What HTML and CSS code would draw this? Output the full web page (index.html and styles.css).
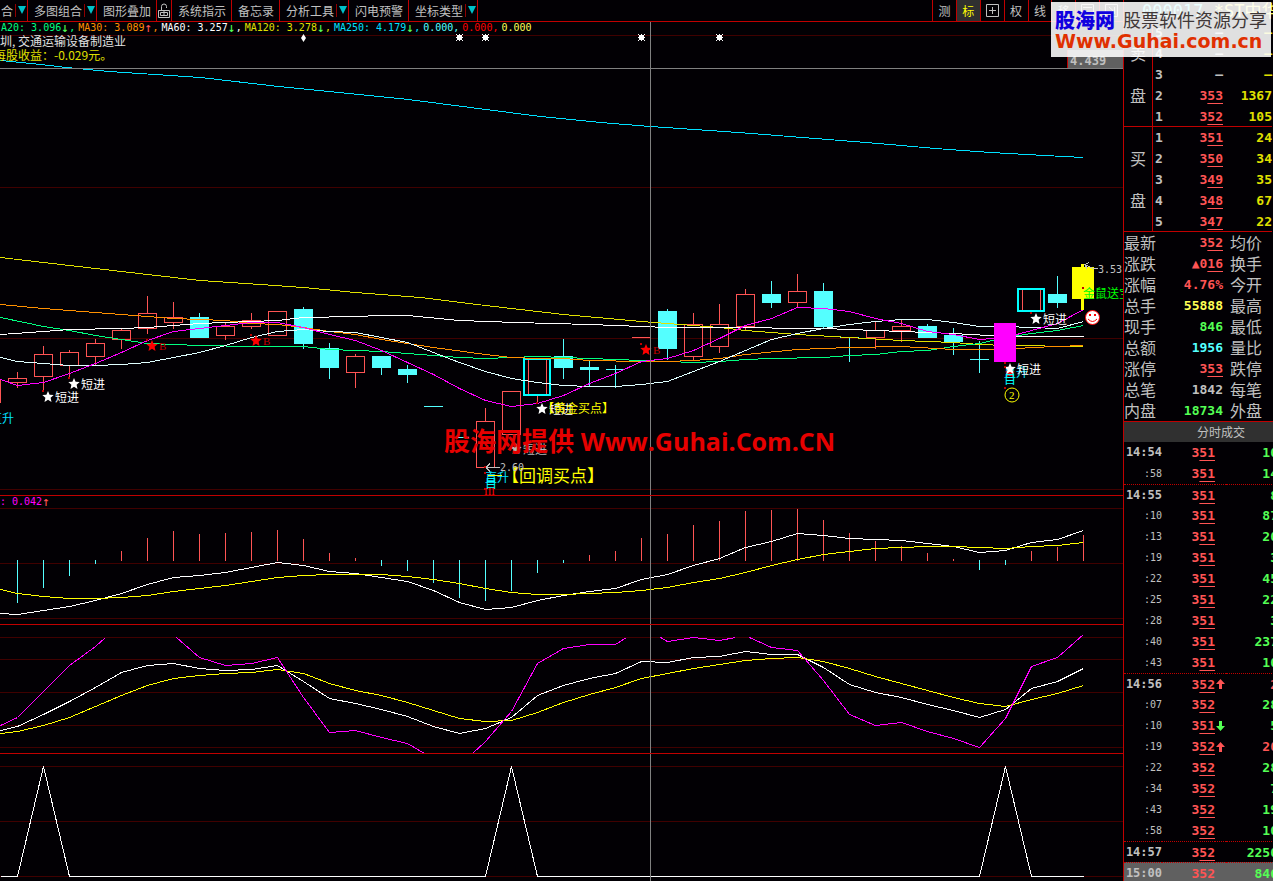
FILE: index.html
```
<!DOCTYPE html>
<html lang="zh-CN">
<head>
    <meta charset="UTF-8">
    <meta name="viewport" content="width=device-width, initial-scale=1.0">
    <title>000017 *ST中华</title>
    <link rel="stylesheet" href="styles.css">
</head>
<body>

<div class="terminal">
    <main class="charts">
        <nav class="toolbar">
            <div class="tools">
                <button class="tool first">合<span class="drop"></span></button>
                <button class="tool">多图组合<span class="drop"></span></button>
                <button class="tool plain">图形叠加</button>
                <button class="tool lock" aria-label="锁定">
                    <svg width="12" height="16" viewBox="0 0 12 16">
                        <path d="M3.5 7V3.500a2.500 2.500 0 0 1 5 0V5M.5 7.500h11v7H.5zM2.500 9.500h7v3h-7z" />
                        <path d="M6 8v5" />
                    </svg>
                </button>
                <button class="tool plain">系统指示</button>
                <button class="tool plain">备忘录</button>
                <button class="tool">分析工具<span class="drop"></span></button>
                <button class="tool plain">闪电预警</button>
                <button class="tool">坐标类型<span class="drop"></span></button>
            </div>
            <div class="modes">
                <button class="mode">测</button>
                <button class="mode active">标</button>
                <button class="mode" aria-label="十字">
                    <svg width="13" height="13" viewBox="0 0 13 13"><path d="M.5.5h12v12H.5zM6.500 3v7M3 6.500h7" /></svg>
                </button>
                <button class="mode">权</button>
                <button class="mode">线</button>
                <button class="mode">移</button>
                <button class="mode" aria-label="窗口">
                    <svg width="13" height="13" viewBox="0 0 13 13"><path d="M.5.5h12v12H.5zM2 3.500h9" /></svg>
                </button>
                <button class="mode" aria-label="末尾">
                    <svg width="13" height="13" viewBox="0 0 13 13"><path d="M.5.5h12v12H.5zM9.500 3v7M4 3l4 3.500-4 3.500" /></svg>
                </button>
            </div>
        </nav>

        <section class="panel">
            <svg class="chart" id="price" viewBox="0 22 1123 473" preserveAspectRatio="none"></svg>
            <div class="overlay">
                <div class="legend">
                    <span class="ma20">A20: 3.096</span><i class="down">↓</i><b class="ma20">,</b>
                    <span class="ma30">MA30: 3.089</span><i class="up">↑</i><b class="ma30">,</b>
                    <span class="ma60">MA60: 3.257</span><i class="down">↓</i><b class="ma60">,</b>
                    <span class="ma120">MA120: 3.278</span><i class="down">↓</i><b class="ma120">,</b>
                    <span class="ma250">MA250: 4.179</span><i class="down">↓</i><b class="ma250">,</b>
                    <span class="cyan">0.000</span><b class="cyan">,</b>
                    <span class="red">0.000</span><b class="red">,</b>
                    <span class="yellow">0.000</span>
                </div>
                <p class="info">圳, 交通运输设备制造业</p>
                <p class="info eps">每股收益：-0.029元。</p>
            </div>
            <div class="watermark">股海网提供 <span>Www.Guhai.Com.CN</span></div>
        </section>

        <section class="panel">
            <svg class="chart" id="macd" viewBox="0 496 1123 128" preserveAspectRatio="none"></svg>
            <div class="overlay">
                <div class="legend macd-legend"><span class="magenta">: 0.042</span><i class="up">↑</i></div>
            </div>
        </section>

        <section class="panel">
            <svg class="chart" id="kdj" viewBox="0 625 1123 128" preserveAspectRatio="none"></svg>
        </section>

        <section class="panel last">
            <svg class="chart" id="signal" viewBox="0 754 1123 127" preserveAspectRatio="none"></svg>
        </section>
    </main>

    <aside class="quote">
        <h1 class="stock"><span class="cyan">000017</span> <span class="yellow">*ST中华</span></h1>
        <table class="book" id="book"></table>
        <table class="stats" id="stats"></table>
        <h2 class="trades-title">分时成交</h2>
        <table class="trades" id="trades"></table>
    </aside>

    <div class="brand">
        <div class="brand-top"><strong>股海网</strong><span>股票软件资源分享</span></div>
        <div class="brand-url">Www.Guhai.com.cn</div>
    </div>
</div>

<script src="script.js"></script>
</body>
</html>
```

FILE: styles.css
```
body {
    margin: 0;
    background: #020004;
    color: #c0c0c0;
    font-family: "DejaVu Sans Mono", "Noto Sans CJK SC", monospace;
    font-size: 12px;
    overflow: hidden;
}

button {
    margin: 0;
    padding: 0;
    background: none;
    border: 0;
    color: inherit;
    font: inherit;
}

.terminal {
    position: relative;
    display: grid;
    grid-template-columns: minmax(0, 1fr) 149px;
    height: 100vh;
    overflow: hidden;
}

.charts {
    display: grid;
    grid-template-rows: 22px minmax(0, 474fr) minmax(0, 129fr) minmax(0, 129fr) minmax(0, 127fr);
    border-right: 1px solid #c00000;
    min-width: 0;
}

/* toolbar */

.toolbar {
    display: flex;
    justify-content: space-between;
    border-bottom: 1px solid #c00000;
    font-family: "Noto Sans CJK SC", sans-serif;
}

.tools,
.modes {
    display: flex;
}

.tool {
    display: flex;
    align-items: center;
    gap: 2px;
    padding-left: 6px;
    border-right: 1px solid #c00000;
    white-space: nowrap;
}

.first {
    padding-left: 1px;
}

.plain {
    padding-right: 5px;
}

.lock {
    padding: 0 1px;
}

.drop {
    display: flex;
    justify-content: center;
    width: 11px;
    height: 13px;
    border-left: 1px solid #900000;
}

.drop::before {
    content: "";
    width: 0;
    height: 0;
    margin-top: 2px;
    border: 4px solid transparent;
    border-top: 8px solid #00c0c8;
    border-bottom: 0;
}

.tool svg,
.mode svg {
    fill: none;
    stroke: #c0c0c0;
}

.modes {
    width: 190px;
    border-left: 1px solid #c00000;
}

.mode {
    flex: 1;
    display: flex;
    align-items: center;
    justify-content: center;
    border-right: 1px solid #c00000;
}

.mode:last-child {
    border-right: 0;
}

.mode.active {
    background: #303030;
    color: #ffff00;
}

/* chart panels */

.panel {
    position: relative;
    border-bottom: 1px solid #c00000;
    min-height: 0;
    overflow: hidden;
}

.panel.last {
    border-bottom: 0;
}

.chart {
    display: block;
    width: 100%;
    height: 100%;
}

.overlay {
    position: absolute;
    top: 0;
    left: 0;
}

.legend {
    display: flex;
    padding-left: 1px;
    height: 12px;
    line-height: 12px;
    font-size: 10px;
    white-space: nowrap;
}

.legend b {
    width: 9px;
    font-weight: normal;
}

.legend i {
    width: 8px;
    font-size: 13px;
    font-style: normal;
}

.macd-legend {
    padding-left: 0;
}

.info {
    margin: 0;
    height: 14px;
    line-height: 14px;
    color: #e0e0e0;
    font-family: "Noto Sans CJK SC", sans-serif;
    white-space: nowrap;
}

.eps {
    margin-left: -6px;
    color: #e0e000;
}

.ma20 { color: #00ff80; }
.ma30 { color: #ff9000; }
.ma60 { color: #ffffff; }
.ma120 { color: #e0e000; }
.ma250 { color: #00e0ff; }
.down { color: #54ff54; }
.up { color: #ff5454; }
.cyan { color: #54ffff; }
.red { color: #ff0000; }
.yellow { color: #ffff54; }
.magenta { color: #ff00ff; }
.green { color: #54ff54; }
.rise { color: #ff5454; }
.volume { color: #e0e000; }

.watermark {
    position: absolute;
    top: 401px;
    left: 444px;
    line-height: 36px;
    color: #e60000;
    font-family: "Open Sans", "Noto Sans CJK SC", sans-serif;
    font-size: 26px;
    font-weight: bold;
    white-space: nowrap;
}

.watermark span {
    font-size: 25px;
}

/* svg parts */

.line {
    fill: none;
    stroke-width: 1;
    shape-rendering: crispEdges;
}

.body,
.wick {
    shape-rendering: crispEdges;
}

.mark {
    font-family: "Noto Sans CJK SC", sans-serif;
    font-size: 12px;
}

.mark.big {
    font-size: 17px;
}

.mark.num {
    font-family: "DejaVu Sans Mono", monospace;
    font-size: 10px;
}

.mark.price {
    font-family: "DejaVu Sans Mono", monospace;
    font-size: 12px;
    font-weight: bold;
}

.mark.serif {
    font-family: "Liberation Serif", serif;
    font-size: 11px;
}

/* quote column */

.quote {
    overflow: hidden;
    font-size: 13px;
    font-weight: bold;
}

.stock {
    margin: 0;
    padding-left: 18px;
    height: 22px;
    line-height: 22px;
    font-size: 17px;
    font-weight: normal;
    white-space: nowrap;
}

table {
    table-layout: fixed;
    border-collapse: separate;
    border-spacing: 0;
}

th,
td {
    box-sizing: border-box;
    padding: 0;
    height: 21px;
    line-height: 19px;
    text-align: right;
    white-space: nowrap;
}

th {
    text-align: left;
    font-family: "Noto Sans CJK SC", sans-serif;
    font-size: 16px;
    font-weight: normal;
}

u {
    text-underline-offset: 3px;
    text-decoration-thickness: 1px;
}

.book {
    width: 148px;
}

.book .side,
.book tr:last-child td {
    border-bottom: 1px solid #c00000;
}

.book .side {
    width: 29px;
    border-right: 1px solid #c00000;
    line-height: 42px;
    text-align: center;
    vertical-align: middle;
}

.side span {
    display: block;
}

.book .level {
    width: 18px;
    padding-left: 2px;
    text-align: left;
}

.book .cost {
    width: 52px;
}

.stats {
    width: 149px;
}

.stats .name {
    width: 32px;
}

.stats .value {
    width: 74px;
    padding-right: 7px;
}

.trades-title {
    margin: 0;
    width: 194px;
    height: 20px;
    line-height: 19px;
    border-top: 1px solid #c00000;
    background: #303030;
    font-family: "Noto Sans CJK SC", sans-serif;
    font-size: 12px;
    font-weight: normal;
    text-align: center;
}

.trades {
    width: 154px;
}

.trades .time {
    width: 38px;
    font-size: 12px;
}

.trades .second {
    font-size: 10px;
    font-weight: normal;
}

.trades .cost {
    width: 53px;
}

.trades .trend {
    width: 11px;
    padding-left: 1px;
}

.trades svg {
    display: block;
}

.trades .minute td {
    border-top: 1px dotted #c00000;
}

.trades .close {
    background: #606060;
}

/* site banner over the corner */

.brand {
    position: absolute;
    top: 2px;
    right: 2px;
    width: 216px;
    height: 51px;
    padding: 4px 0 0 4px;
    background: rgba(255, 255, 255, 0.88);
    white-space: nowrap;
}

.brand-top {
    display: flex;
    align-items: center;
    gap: 8px;
    height: 26px;
    font-family: "Noto Sans CJK SC", sans-serif;
    font-size: 18px;
    color: #403838;
}

.brand-top strong {
    color: #1000e0;
    font-size: 20px;
    font-weight: 900;
}

.brand-url {
    line-height: 18px;
    color: #e03000;
    font-family: "DejaVu Sans", sans-serif;
    font-size: 19px;
    font-weight: bold;
}
```

FILE: script.js
```
const STEP = 26;
const FIRST = 17;

const RED = "#ff5454";
const CYAN = "#54ffff";
const GRID = "#400000";

// body top, body bottom, high, low, type (r = hollow red, c = solid cyan)
const candles = [
    [378, 383, 372, 388, "r"], [354, 377, 346, 391, "r"], [352, 366, 350, 377, "r"],
    [343, 357, 339, 365, "r"], [330, 340, 328, 349, "r"], [313, 329, 296, 334, "r"],
    [317, 323, 302, 329, "r"], [317, 338, 313, 338, "c"], [326, 336, 322, 340, "r"],
    [320, 327, 313, 329, "r"], [311, 336, 311, 336, "r"], [309, 344, 307, 349, "c"],
    [348, 368, 343, 379, "c"], [356, 373, 354, 388, "r"], [356, 368, 356, 375, "c"],
    [369, 375, 365, 383, "c"], [406, 407, 406, 407, "c"], [437, 438, 437, 438, "c"],
    [421, 468, 408, 468, "r"], [391, 435, 391, 435, "r"], [358, 396, 358, 403, "box"],
    [356, 368, 339, 379, "c"], [367, 370, 361, 386, "c"], [369, 370, 365, 388, "c"],
    [337, 338, 337, 338, "r"], [311, 349, 309, 360, "c"], [324, 357, 313, 361, "r"],
    [324, 347, 304, 353, "r"], [294, 327, 289, 331, "r"], [294, 303, 281, 308, "c"],
    [291, 303, 274, 308, "r"], [291, 327, 283, 329, "c"], [337, 338, 337, 362, "c"],
    [330, 338, 321, 349, "r"], [326, 331, 320, 342, "r"], [326, 338, 324, 338, "c"],
    [335, 342, 328, 355, "c"], [359, 360, 341, 373, "c"], null,
    [288, 312, 288, 312, "box"], [294, 303, 276, 308, "c"], null
];

const averages = [
    ["#00e0ff", "0,60 20,62 40,64 66,67 109,71 200,77 278,86 348,93 408,99 470,107 540,116 600,122 650,126 738,132 815,138 878,143 935,148 990,152 1044,155 1083,157"],
    ["#e0e000", "0,257 69,265 147,274 200,280 260,284 303,287 355,292 420,297 485,305 563,314 641,321 667,323 693,325 719,327 745,330 797,334 849,337 901,340 953,342 979,344 1005,345 1083,346"],
    ["#00ff80", "0,317 43,326 69,330 95,335 147,343 199,345 251,346 303,346 329,349 381,351 407,353 459,357 485,358 511,357 537,356 589,358 641,360 667,361 693,362 719,361 745,359 771,358 823,357 849,355 875,354 901,351 927,350 953,346 979,343 1005,337 1031,333 1057,330 1083,325"],
    ["#ff9000", "0,304 43,308 69,310 121,314 147,316 173,318 225,320 251,323 277,324 303,327 329,331 355,334 381,339 407,343 433,347 485,354 511,357 537,358 563,358 589,360 641,361 667,361 693,360 719,358 745,354 797,349 849,347 901,346 953,349 1005,349 1031,347 1057,346 1083,345"],
    ["#ffffff", "0,334 43,331 69,329 121,328 147,327 199,323 225,322 277,320 303,317 355,316 381,315 407,315 459,320 515,322 589,324 667,327 719,327 823,328 849,329 901,331 953,333 1005,336 1083,336"],
    ["#e0ffff", "0,357 17,361 43,363 69,365 95,365 121,364 147,362 173,357 199,352 225,345 251,337 277,331 303,329 329,331 355,332 381,337 407,342 433,352 459,362 485,371 511,378 537,382 563,385 589,386 615,386 641,384 667,381 693,371 719,361 745,350 771,339 797,333 823,328 849,324 875,321 901,319 927,319 953,322 979,326 1005,326 1031,327 1057,328 1083,321"],
    ["#ff00ff", "0,379 17,385 43,382 69,373 95,363 121,352 147,340 173,331 199,328 225,325 251,322 277,322 303,327 329,334 355,340 381,350 407,362 433,374 459,388 485,400 511,406 537,403 563,395 589,383 615,373 641,361 667,358 693,350 719,338 745,325 771,318 797,307 823,308 849,311 875,318 901,323 927,331 953,334 979,339 1005,337 1031,330 1057,323 1083,309"]
];

const macdBars = [603, 588, 576, 564, 551, 538, 531, 534, 533, 532, 530, 539, 553, 558, 566, 571, 583, 598, 601, 591, 573, 563, 555, 551, 538, 534, 525, 521, 511, 510, 509, 520, 533, 541, 546, 553, 559, 570, 565, 551, 547, 535];
const dif = [614, 610, 606, 600, 593, 584, 577, 575, 572, 567, 562, 565, 571, 573, 577, 581, 590, 602, 609, 607, 600, 595, 591, 588, 579, 574, 565, 558, 547, 541, 533, 535, 538, 539, 540, 543, 546, 552, 550, 542, 539, 530];
const dea = [593, 596, 598, 598, 597, 595, 591, 588, 585, 581, 577, 575, 574, 574, 574, 576, 579, 583, 588, 592, 594, 594, 593, 592, 590, 587, 582, 578, 572, 565, 559, 554, 551, 548, 547, 546, 546, 547, 548, 546, 545, 542];

const kLine = [726, 714, 701, 687, 672, 665, 663, 668, 670, 669, 665, 681, 698, 703, 709, 716, 726, 733, 728, 717, 695, 685, 678, 673, 661, 662, 657, 656, 651, 654, 654, 667, 684, 692, 697, 704, 710, 717, 709, 688, 681, 668];
const dLine = [731, 725, 717, 706, 695, 685, 678, 675, 673, 672, 669, 673, 683, 690, 695, 702, 710, 718, 721, 720, 712, 702, 694, 687, 678, 673, 668, 664, 660, 658, 657, 661, 668, 676, 683, 690, 697, 703, 706, 699, 693, 685];
// J leaves the panel at both ends, so it is kept as separate runs
const jLine = [
    "0,725 17,717 43,691 69,665 95,646 105,637",
    "176,637 199,657 225,665 251,663 277,657 303,697 329,732 355,730 381,737 407,743 424,753",
    "472,753 485,741 511,711 537,663 563,648 589,644 615,644 626,637",
    "660,637 667,641 693,637 719,640 735,637",
    "749,637 771,647 797,650 823,680 849,714 875,725 901,722 927,731 953,738 979,747 1005,718 1031,666 1057,657 1083,634"
];

function xAt(i) {
    return FIRST + i * STEP;
}

function rect(x, y, w, h, fill) {
    return `<rect class="body" x="${x}" y="${y}" width="${w}" height="${h}" fill="${fill}"/>`;
}

function frame(x, y, w, h, stroke, size) {
    const o = size / 2;
    return `<rect class="body" x="${x + o}" y="${y + o}" width="${w - size}" height="${h - size}" fill="none" stroke="${stroke}" stroke-width="${size}"/>`;
}

function line(points, color) {
    return `<polyline class="line" points="${points}" stroke="${color}" transform="translate(.5 .5)"/>`;
}

function series(values, start) {
    return `0,${start} ` + values.map((v, i) => `${xAt(i)},${v}`).join(" ");
}

function grid(rows) {
    return rows.map(y => rect(0, y, 1123, 1, GRID)).join("");
}

function text(x, y, str, fill, cls = "") {
    return `<text class="mark ${cls}" x="${x}" y="${y}" fill="${fill}">${str}</text>`;
}

function crosshair(top, height) {
    return rect(650, top, 1, height, "#808080");
}

function star(cx, cy, r, fill) {
    const pts = [];
    for (let i = 0; i < 10; i++) {
        const a = Math.PI * (i / 5 - 0.5);
        const d = i % 2 ? r * 0.45 : r;
        pts.push((cx + d * Math.cos(a)).toFixed(1) + "," + (cy + d * Math.sin(a)).toFixed(1));
    }
    return `<polygon points="${pts.join(" ")}" fill="${fill}"/>`;
}

function candle(c, i) {
    if (!c) return "";
    const [top, bottom, high, low, type] = c;
    const x = xAt(i);
    if (type === "c") {
        return rect(x, high, 1, low - high, CYAN) + rect(x - 9, top, 19, bottom - top, CYAN);
    }
    if (type === "box") {
        return rect(x, bottom, 1, low - bottom, RED) + frame(x - 9, top, 19, bottom - top, RED, 1)
            + frame(x - 14, top, 28, bottom - top, "#00ffff", 2);
    }
    return rect(x, high, 1, top - high, RED) + rect(x, bottom, 1, low - bottom, RED)
        + (bottom - top > 1 ? frame(x - 9, top, 19, bottom - top, RED, 1) : rect(x - 9, top, 19, 1, RED));
}

function buy(x, y) {
    return star(x + 6, y - 4, 6, "#fff") + text(x + 13, y + 1, "短进", "#fff");
}

function drawPrice() {
    let s = grid([35, 187, 338, 489]);
    s += rect(0, 379, 1, 24, RED);
    s += candles.map(candle).join("");
    s += averages.map(([color, pts]) => line(pts, color)).join("");

    // highlighted bars
    s += rect(994, 323, 22, 39, "#ff00ff");
    s += rect(1081, 264, 3, 46, "#ffff00") + rect(1072, 267, 22, 32, "#ffff00");

    // event marks along the top
    [459, 485, 641, 719].forEach(x => {
        s += rect(x - 2, 35, 5, 5, "#fff") + rect(x, 34, 1, 7, "#fff") + rect(x - 3, 37, 7, 1, "#fff");
        s += rect(x - 3, 34, 1, 1, "#fff") + rect(x + 3, 34, 1, 1, "#fff") + rect(x - 3, 40, 1, 1, "#fff") + rect(x + 3, 40, 1, 1, "#fff");
    });
    s += `<path d="M303.500 34l2.500 4-2.500 4-2.500-4z" fill="#fff"/>`;

    // signals
    s += buy(42, 401) + buy(68, 388) + buy(1030, 323);
    s += buy(536, 413) + text(542, 413, "【黄金买点】", "#ffff00");
    s += `<g opacity=".7">${buy(510, 453)}</g>`;
    [[152, 346], [256, 341], [646, 350]].forEach(([x, y]) => {
        s += star(x, y, 6, "#ff0000") + text(x + 7, y + 4, "B", "#c00000", "serif");
    });
    s += text(2, 423, "升", "#00e0ff") + text(-10, 423, "直", "#00e0ff");
    s += text(485, 482, "直升", "#00e0ff") + text(485, 488, "目", "#00ffff") + text(484, 495, "III", "#ff0000", "serif");
    s += rect(488, 475, 14, 1, "#ffff00");
    s += text(502, 482, "【回调买点】", "#ffff00", "big");
    s += text(500, 471, "2.60", "#c0c0c0", "num");
    s += `<path class="line" d="M500 467.500h-14M490 463.500l-4 4 4 4" stroke="#c0c0c0"/>`;
    s += text(1004, 377, "直升", "#00e0ff") + star(1010, 373, 5, "#ff0000") + buy(1004, 373);
    s += text(1004, 384, "目", "#00ffff");
    s += `<circle cx="1012" cy="395" r="7" fill="none" stroke="#ffff00"/>` + text(1009, 399, "2", "#ffff00", "serif");
    [[42, 390], [68, 377], [146, 339], [250, 334], [640, 343], [536, 402], [484, 466], [484, 472], [484, 488], [1030, 312], [1004, 362], [1004, 366], [1004, 387], [1082, 287]].forEach(([x, y]) => {
        s += rect(x, y, 2, 2, "#c00000");
    });
    s += text(1083, 298, "金鼠送宝", "#00ff00");
    s += text(1098, 273, "3.53", "#c0c0c0", "num");
    s += `<path class="line" d="M1098 268.500h-5l-8-4M1089 262.500l-4 2 2 4" stroke="#c0c0c0"/>`;
    s += `<circle cx="1092.500" cy="317.500" r="7" fill="#fff" stroke="#ff0000"/>`;
    s += rect(1089, 314, 2, 2, "#ff0000") + rect(1094, 314, 2, 2, "#ff0000");
    s += `<path d="M1088 319q4.500 5 9 0" fill="none" stroke="#ff0000"/>`;

    // cursor price
    s += rect(1067, 50, 56, 18, "#606060") + rect(1067, 50, 1, 18, "#c00000");
    s += text(1070, 65, "4.439", "#c0c0c0", "price");
    s += rect(0, 68, 1123, 1, "#808080") + crosshair(22, 473);
    document.getElementById("price").innerHTML = s;
}

function drawMacd() {
    let s = grid([508, 563, 618]);
    s += macdBars.map((y, i) => y < 561 ? rect(xAt(i), y, 1, 561 - y, RED) : rect(xAt(i), 560, 1, y - 560, CYAN)).join("");
    s += line(series(dif, 613), "#fff") + line(series(dea, 589), "#ffff00") + crosshair(496, 128);
    document.getElementById("macd").innerHTML = s;
}

function drawKdj() {
    let s = grid([637, 659, 692, 725, 747]);
    s += line(series(kLine, 730), "#fff") + line(series(dLine, 733), "#ffff00");
    s += jLine.map(run => line(run, "#ff00ff")).join("") + crosshair(625, 128);
    document.getElementById("kdj").innerHTML = s;
}

function drawSignal() {
    let s = grid([766, 821, 876]);
    s += line("0,876 17,876 43,766 69,876 485,876 511,766 537,876 979,876 1005,766 1031,876 1083,876", "#fff");
    document.getElementById("signal").innerHTML = s + crosshair(754, 127);
}

// prices show their last two digits underlined
function price(p) {
    return /^\d{3}$/.test(p) ? p[0] + "<u>" + p.slice(1) + "</u>" : p;
}

function drawBook() {
    const sides = [
        ["卖", [[5, "–", "–"], [4, "–", "–"], [3, "–", "–"], [2, "353", 1367], [1, "352", 105]]],
        ["买", [[1, "351", 24], [2, "350", 34], [3, "349", 35], [4, "348", 67], [5, "347", 22]]]
    ];
    document.getElementById("book").innerHTML = sides.map(([name, rows]) => "<tbody>" + rows.map(([level, p, vol], i) => `
        <tr>
            ${i === 0 ? `<th class="side" rowspan="5"><span>${name}</span><span>盘</span></th>` : ""}
            <td class="level">${level}</td>
            <td class="cost ${p === "–" ? "" : "rise"}">${price(p)}</td>
            <td class="volume">${vol}</td>
        </tr>`).join("") + "</tbody>").join("");
}

function drawStats() {
    const rows = [
        ["最新", "352", "rise", "均价"],
        ["涨跌", "▲0<u>16</u>", "rise", "换手"],
        ["涨幅", "4.76%", "rise", "今开"],
        ["总手", "55888", "yellow", "最高"],
        ["现手", "846", "green", "最低"],
        ["总额", "1956", "cyan", "量比"],
        ["涨停", "353", "rise", "跌停"],
        ["总笔", "1842", "", "每笔"],
        ["内盘", "18734", "green", "外盘"]
    ];
    document.getElementById("stats").innerHTML = rows.map(([name, value, cls, other]) => `
        <tr>
            <th class="name">${name}</th>
            <td class="value ${cls}">${cls === "rise" ? price(value) : value}</td>
            <th>${other}</th>
        </tr>`).join("");
}

function drawTrades() {
    const rows = [
        ["14:54", "351", 10], [":58", "351", 14], ["14:55", "351", 8], [":10", "351", 87],
        [":13", "351", 20], [":19", "351", 3], [":22", "351", 45], [":25", "351", 22],
        [":28", "351", 3], [":40", "351", 237], [":43", "351", 10], ["14:56", "352", 2, "up"],
        [":07", "352", 28], [":10", "351", 5, "down"], [":19", "352", 20, "up"], [":22", "352", 28],
        [":34", "352", 7], [":43", "352", 19], [":58", "352", 10], ["14:57", "352", 2250], ["15:00", "352", 846]
    ];
    const arrows = {
        up: `<svg width="9" height="10"><path d="M4.500 0L9 5H6v5H3V5H0z" fill="#ff5454"/></svg>`,
        down: `<svg width="9" height="10"><path d="M4.500 10L9 5H6V0H3v5H0z" fill="#54ff54"/></svg>`
    };
    document.getElementById("trades").innerHTML = rows.map(([time, p, vol, dir], i) => {
        const minute = time.length === 5;
        return `
        <tr class="${minute && i ? "minute" : ""} ${time === "15:00" ? "close" : ""}">
            <td class="time ${minute ? "" : "second"}">${time}</td>
            <td class="cost rise">${price(p)}</td>
            <td class="trend">${dir ? arrows[dir] : ""}</td>
            <td class="${dir === "up" ? "rise" : "green"}">${vol}</td>
        </tr>`;
    }).join("");
}

drawPrice();
drawMacd();
drawKdj();
drawSignal();
drawBook();
drawStats();
drawTrades();
```
